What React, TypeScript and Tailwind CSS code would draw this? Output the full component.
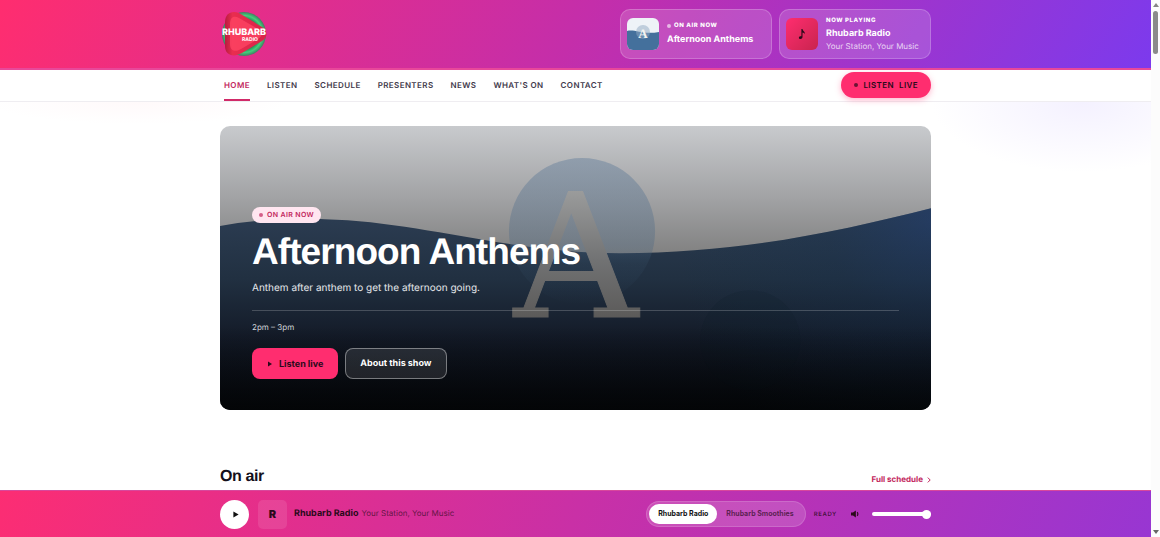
import { useState } from "react";

const NAV = ["Home", "Listen", "Schedule", "Presenters", "News", "What's on", "Contact"];
const STATIONS = ["Rhubarb Radio", "Rhubarb Smoothies"];

function Logo() {
  return (
    <svg viewBox="0 0 48 48" className="h-12 w-12 overflow-visible" role="img" aria-label="Rhubarb Radio">
      <defs>
        <radialGradient id="leaf" cx="50%" cy="50%" r="50%">
          <stop offset="62%" stopColor="#1f6b45" />
          <stop offset="84%" stopColor="#43cf7c" />
          <stop offset="100%" stopColor="#3f7f60" />
        </radialGradient>
        <linearGradient id="stalk" x1="0" y1="0" x2="1" y2="0">
          <stop offset="0%" stopColor="#b81c40" />
          <stop offset="18%" stopColor="#e92d4f" />
          <stop offset="100%" stopColor="#d92348" />
        </linearGradient>
      </defs>
      <circle cx="24" cy="24" r="22" fill="url(#leaf)" />
      <path d="M5 12C5 3 12 0 19 3L42 17C48 21 48 27 42 31L22 43C13 48 5 45 5 36Z" fill="url(#stalk)" />
      <path d="M10 14C10 7 14 5 19 8L38 19C43 22 43 26 38 29L21 39C14 43 10 40 10 34Z" fill="#ff4664" opacity="0.75" />
      <g fill="#fff" fontFamily="Inter, 'Liberation Sans', sans-serif" fontWeight="800">
        <text x="24" y="25" fontSize="9" textAnchor="middle">RHUBARB</text>
        <text x="30" y="31" fontSize="5" fontWeight="700" textAnchor="middle">RADIO</text>
      </g>
    </svg>
  );
}

function ShowThumb() {
  return (
    <svg viewBox="0 0 32 32" className="h-8 w-8 shrink-0 rounded-md" aria-hidden="true">
      <rect width="32" height="32" fill="#eef3f7" />
      <path d="M0 13C8 11 16 17 32 14V32H0Z" fill="#44709c" />
      <circle cx="16" cy="14" r="7" fill="#8fa9c1" opacity="0.5" />
      <text x="16" y="20" fontSize="13" fontWeight="700" textAnchor="middle" fill="#f4f4f0" fontFamily="'Liberation Serif', serif">
        A
      </text>
    </svg>
  );
}

function HeroArt() {
  return (
    <svg
      viewBox="0 0 711 284"
      preserveAspectRatio="xMidYMid slice"
      className="absolute inset-0 h-full w-full"
      aria-hidden="true"
    >
      <defs>
        <linearGradient id="sky" x1="0" y1="0" x2="0" y2="1">
          <stop offset="0%" stopColor="#c8cacd" />
          <stop offset="25%" stopColor="#a2a3a5" />
          <stop offset="45%" stopColor="#818181" />
        </linearGradient>
        <linearGradient id="sea" gradientUnits="userSpaceOnUse" x1="0" y1="82" x2="0" y2="284">
          <stop offset="0%" stopColor="#2d3e54" />
          <stop offset="35%" stopColor="#213041" />
          <stop offset="65%" stopColor="#131a27" />
          <stop offset="85%" stopColor="#0b0f17" />
          <stop offset="100%" stopColor="#040607" />
        </linearGradient>
        <radialGradient id="blue" gradientUnits="userSpaceOnUse" cx="711" cy="95" r="260">
          <stop offset="0%" stopColor="#1b3c78" stopOpacity="0.4" />
          <stop offset="40%" stopColor="#15304f" stopOpacity="0.25" />
          <stop offset="100%" stopColor="#12304a" stopOpacity="0" />
        </radialGradient>
        <linearGradient id="sun" x1="0" y1="0" x2="0" y2="1">
          <stop offset="0%" stopColor="#66809c" stopOpacity="0.48" />
          <stop offset="60%" stopColor="#4d6883" stopOpacity="0.36" />
          <stop offset="72%" stopColor="#3d5870" stopOpacity="0.18" />
          <stop offset="100%" stopColor="#35526f" stopOpacity="0" />
        </linearGradient>
        <linearGradient id="letter" gradientUnits="userSpaceOnUse" x1="0" y1="64" x2="0" y2="192">
          <stop offset="0%" stopColor="#9b9c9c" />
          <stop offset="55%" stopColor="#717273" />
          <stop offset="100%" stopColor="#5b5a59" />
        </linearGradient>
        <linearGradient id="shade" gradientUnits="userSpaceOnUse" x1="0" y1="200" x2="0" y2="284">
          <stop offset="0%" stopColor="#030507" stopOpacity="0" />
          <stop offset="100%" stopColor="#030507" stopOpacity="0.7" />
        </linearGradient>
      </defs>
      <rect width="711" height="284" fill="url(#sky)" />
      <path d="M0 100C35 93 75 92 105 93C200 95 290 127 400 127C520 127 620 105 711 82V284H0Z" fill="url(#sea)" />
      <path d="M0 100C35 93 75 92 105 93C200 95 290 127 400 127C520 127 620 105 711 82V284H0Z" fill="url(#blue)" />
      <circle cx="362" cy="105" r="73" fill="url(#sun)" />
      <circle cx="530" cy="214" r="50" fill="#0a1a20" opacity="0.12" />
      <text
        x="356"
        y="191"
        fontSize="172"
        textAnchor="middle"
        fill="url(#letter)"
        stroke="url(#letter)"
        strokeWidth="1"
        fontFamily="'DejaVu Serif', serif"
      >
        A
      </text>
      <rect y="200" width="711" height="84" fill="url(#shade)" />
    </svg>
  );
}

function Hero() {
  return (
    <section className="relative flex aspect-[5/2] flex-col items-start justify-end overflow-hidden rounded-[10px] px-8 pb-[31px] text-white">
      <HeroArt />
      <div className="relative flex w-full flex-col items-start">
        <span className="flex h-4 items-center gap-1 rounded-full bg-[#ffe6f0] px-[7px] text-[7px] font-semibold tracking-wider text-[#c2255c]">
          <span className="h-1 w-1 rounded-full bg-[#c2255c]/70" />
          ON AIR NOW
        </span>
        <h1 className="mt-[11px] font-['Liberation_Sans',sans-serif] text-[37px] leading-9 font-bold tracking-tight">
          Afternoon Anthems
        </h1>
        <p className="mt-[10px] text-[10px] leading-4 text-[#e4e7ea]">Anthem after anthem to get the afternoon going.</p>
        <div className="mt-[14px] w-full border-t border-white/20 pt-[11px] text-[8px] leading-[11px] text-[#d2d6db]">2pm – 3pm</div>
        <div className="mt-[15px] flex gap-[7px] text-[9px] font-bold">
          <button className="flex h-[31px] items-center gap-[6px] rounded-lg bg-[#ff2d6f] px-[15px] text-[#2a0a1a]">
            <svg viewBox="0 0 6 6" className="h-[6px] w-[6px]" fill="currentColor" aria-hidden="true">
              <path d="M1 0.5L5 3L1 5.5Z" />
            </svg>
            Listen live
          </button>
          <a href="#show" className="flex h-[31px] items-center rounded-lg border border-white/40 bg-white/10 px-[14px]">
            About this show
          </a>
        </div>
      </div>
    </section>
  );
}

function Header() {
  return (
    <header className="border-b-2 border-[#e8489a] bg-[linear-gradient(120deg,#ff2d6f_0%,#c42eaa_50%,#7c3aed_100%)]">
      <div className="mx-auto flex h-[68px] w-full max-w-[711px] items-center justify-between">
        <a href="#home">
          <Logo />
        </a>
        <div className="flex gap-[7px] text-white">
          <a href="#show" className="flex h-[50px] w-[152px] items-center gap-2 rounded-[10px] border border-white/20 bg-white/15 px-[6px]">
            <ShowThumb />
            <span>
              <span className="flex items-center gap-[3px] text-[6px] leading-[10px] font-extrabold tracking-widest">
                <span className="h-1 w-1 rounded-full bg-white/60" />
                ON AIR NOW
              </span>
              <span className="mt-[2px] block text-[9px] leading-[14px] font-bold">Afternoon Anthems</span>
            </span>
          </a>
          <div className="flex h-[50px] w-[152px] items-center gap-2 rounded-[10px] border border-white/20 bg-white/15 px-[6px]">
            <span className="flex h-8 w-8 shrink-0 items-center justify-center rounded-md bg-linear-135 from-[#ff2d6f] to-[#c9244f] text-[#2a0a1a]">
              <svg viewBox="0 0 8 10" className="h-[10px] w-2" fill="currentColor" aria-hidden="true">
                <path d="M3.4 0H4.5C4.6 1.8 7.2 2.2 6.8 5.2C6.4 4 5.6 3.6 4.5 3.4V8C4.5 9.2 3.5 10 2.4 10C1.3 10 0.7 9.3 0.9 8.5C1.1 7.5 2.3 7 3.4 7.3Z" />
              </svg>
            </span>
            <span>
              <span className="block text-[6px] leading-[10px] font-extrabold tracking-widest">NOW PLAYING</span>
              <span className="mt-[1px] block text-[9px] leading-[14px] font-bold">Rhubarb Radio</span>
              <span className="block text-[8px] leading-[11px] text-white/75">Your Station, Your Music</span>
            </span>
          </div>
        </div>
      </div>
    </header>
  );
}

function Nav() {
  return (
    <nav className="border-b border-[#efedf1] bg-white">
      <div className="mx-auto flex h-[31px] w-full max-w-[711px] justify-between">
        <ul className="flex gap-[17px] pl-1 text-[8px] font-semibold tracking-wider text-[#40384a] uppercase">
          {NAV.map((item, i) => (
            <li key={item} className="flex">
              <a
                href="#nav"
                aria-current={i === 0 ? "page" : undefined}
                className={`flex items-center border-b-2 ${
                  i === 0 ? "border-[#d12a68] text-[#c2255c]" : "border-transparent"
                }`}
              >
                {item}
              </a>
            </li>
          ))}
        </ul>
        <button className="mt-[2px] flex h-[26px] items-center gap-[5px] rounded-full bg-[#ff2d6f] px-[13px] text-[8px] font-semibold tracking-wider text-[#2a0a1a] shadow-[0_2px_6px_rgba(255,45,111,0.35)]">
          <span className="h-1 w-1 rounded-full bg-[#2a0a1a]/70" />
          <span>LISTEN</span>
          <span>LIVE</span>
        </button>
      </div>
    </nav>
  );
}

function Player() {
  const [station, setStation] = useState(0);
  const [volume, setVolume] = useState(100);

  return (
    <footer className="border-t border-[#d8489c] bg-[linear-gradient(110deg,#fc2d73_0%,#c930a6_50%,#9836d2_100%)] text-[#2a0a1a]">
      <div className="mx-auto flex h-[46px] w-full max-w-[711px] items-center">
        <button aria-label="Play" className="flex h-[29px] w-[29px] items-center justify-center rounded-full bg-white">
          <svg viewBox="0 0 6 8" className="ml-[2px] h-[7px] w-[6px]" fill="#111" aria-hidden="true">
            <path d="M0 0.5L6 4L0 7.5Z" />
          </svg>
        </button>
        <span className="ml-[9px] flex h-[29px] w-[29px] items-center justify-center rounded-[5px] bg-white/10 text-[11px] font-black">R</span>
        <span className="ml-[7px] flex items-baseline gap-[3px]">
          <b className="text-[9px] font-bold">Rhubarb Radio</b>
          <span className="text-[8px] text-[#2a0a1a]/70">Your Station, Your Music</span>
        </span>
        <div className="ml-auto flex h-[26px] items-center rounded-full border border-white/15 bg-white/15 p-[2px] text-[7px] font-bold">
          {STATIONS.map((name, i) => (
            <button
              key={name}
              aria-pressed={station === i}
              onClick={() => setStation(i)}
              className={`h-5 rounded-full px-[9px] ${station === i ? "bg-white text-[#111]" : "text-[#2a0a1a]/70"}`}
            >
              {name}
            </button>
          ))}
        </div>
        <span className="ml-2 text-[6px] font-semibold tracking-widest text-[#2a0a1a]/80">READY</span>
        <button aria-label="Mute" className="ml-[14px]">
          <svg viewBox="0 0 10 8" className="h-2 w-[9px]" aria-hidden="true">
            <path d="M0 2.3H2.2L5.4 0V8L2.2 5.7H0Z" fill="#2a0a1a" />
            <path d="M6.8 2C7.9 3 7.9 5 6.8 6" fill="none" stroke="#2a0a1a" strokeWidth="1.3" />
          </svg>
        </button>
        <input
          type="range"
          aria-label="Volume"
          min={0}
          max={100}
          value={volume}
          onChange={(e) => setVolume(Number(e.target.value))}
          className="ml-3 h-1 w-[59px] appearance-none rounded-full bg-white [&::-webkit-slider-thumb]:h-[9px] [&::-webkit-slider-thumb]:w-[9px] [&::-webkit-slider-thumb]:appearance-none [&::-webkit-slider-thumb]:rounded-full [&::-webkit-slider-thumb]:bg-white"
        />
      </div>
    </footer>
  );
}

function ScrollRail() {
  return (
    <div className="flex w-[9px] shrink-0 flex-col items-center justify-between bg-[#fcfcfc] py-[3px]" aria-hidden="true">
      <div className="flex flex-col items-center gap-1">
        <svg viewBox="0 0 6 4" className="h-1 w-[6px]" fill="#858585">
          <path d="M3 0L6 4H0Z" />
        </svg>
        <div className="h-[43px] w-[5px] rounded-full bg-[#8b8b8b]" />
      </div>
      <svg viewBox="0 0 6 4" className="h-1 w-[6px]" fill="#666">
        <path d="M3 4L6 0H0Z" />
      </svg>
    </div>
  );
}

export default function App() {
  return (
    <div className="flex h-screen bg-white font-['Inter','Liberation_Sans',sans-serif] [text-rendering:geometricPrecision]">
      <div className="flex min-w-0 flex-1 flex-col">
        <Header />
        <Nav />
        <main className="min-h-0 flex-1 overflow-hidden bg-[radial-gradient(ellipse_150px_70px_at_94%_0,#f4f1ff,transparent),radial-gradient(ellipse_150px_22px_at_12%_0,#fff9fa,transparent)]">
          <div className="mx-auto w-full max-w-[711px] pt-6">
            <Hero />
            <div className="mt-[57px] flex items-end justify-between">
              <h2 className="font-['Liberation_Sans',sans-serif] text-[16px] leading-5 font-bold tracking-tight text-[#14101c]">On air</h2>
              <a href="#schedule" className="flex items-center gap-1 text-[8px] leading-4 font-bold text-[#c2255c]">
                Full schedule
                <svg viewBox="0 0 4 6" className="mt-[2px] h-[6px] w-1" fill="none" stroke="currentColor" aria-hidden="true">
                  <path d="M0.8 0.6L3.2 3L0.8 5.4" />
                </svg>
              </a>
            </div>
          </div>
        </main>
        <Player />
      </div>
      <ScrollRail />
    </div>
  );
}
